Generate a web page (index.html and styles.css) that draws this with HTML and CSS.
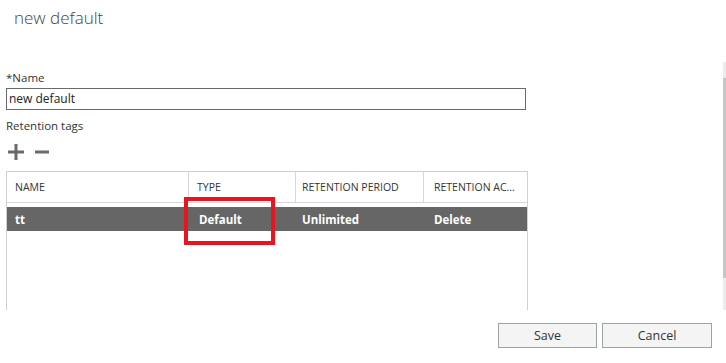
FILE: index.html
```html
<!DOCTYPE html>
<html>
<head>
<meta charset="utf-8">
<link rel="stylesheet" href="styles.css">
</head>
<body>
<div class="dialog">
  <h1 class="title">new default</h1>
  <div class="main">
    <div class="content">
      <div class="label">*Name</div>
      <div class="input">new default</div>
      <div class="label label-tags">Retention tags</div>
      <div class="toolbar">
        <svg class="icon" width="16" height="16" viewBox="0 0 16 16"><path d="M8 0v16M0 8h16" stroke="#6b6b6b" stroke-width="3" fill="none"/></svg>
        <svg class="icon" width="14" height="16" viewBox="0 0 14 16"><path d="M0 8h14" stroke="#6b6b6b" stroke-width="3" fill="none"/></svg>
      </div>
      <div class="grid">
        <div class="grid-head">
          <div class="cell c1">NAME</div>
          <div class="cell c2">TYPE</div>
          <div class="cell c3">RETENTION PERIOD</div>
          <div class="cell c4">RETENTION AC...</div>
        </div>
        <div class="grid-body">
          <div class="row selected">
            <div class="cell c1">tt</div>
            <div class="cell c2 marked">Default<span class="highlight"></span></div>
            <div class="cell c3">Unlimited</div>
            <div class="cell c4">Delete</div>
          </div>
        </div>
      </div>
    </div>
    <div class="scrollbar"><div class="thumb"></div></div>
  </div>
  <div class="footer">
    <button class="btn btn-save">Save</button>
    <button class="btn btn-cancel">Cancel</button>
  </div>
</div>
</body>
</html>
```
FILE: styles.css
```css
html, body {
  margin: 0;
  padding: 0;
  background: #fff;
}
body {
  font-family: "Open Sans", "Noto Sans", sans-serif;
  color: #333;
  width: 726px;
  height: 363px;
  overflow: hidden;
}
.dialog {
  display: flex;
  flex-direction: column;
}
.title {
  margin: 0;
  padding: 6px 0 0 14px;
  height: 24px;
  font-size: 17px;
  line-height: 24px;
  font-weight: 300;
  color: #444;
}
.main {
  margin-top: 32px;
  height: 248px;
  display: flex;
  overflow: hidden;
}
.content {
  flex: 1;
  padding-left: 6px;
  overflow: hidden;
}
.label {
  margin-top: 8px;
  font-size: 11.5px;
  line-height: 16px;
  color: #333;
}
.label-tags {
  margin-top: 8px;
}
.input {
  margin-top: 2px;
  width: 516px;
  height: 20px;
  border: 1px solid #6a6a6a;
  box-sizing: content-box;
  padding-left: 2px;
  font-size: 12px;
  line-height: 20px;
  color: #222;
}
.toolbar {
  display: flex;
  align-items: center;
  gap: 11px;
  padding-left: 2px;
  margin-top: 10px;
  height: 16px;
}
.icon {
  display: block;
}
.grid {
  margin-top: 11px;
  width: 520px;
  height: 200px;
  border: 1px solid #d0d0d0;
  border-bottom: none;
}
.grid-head {
  display: flex;
  height: 30px;
  border-bottom: 1px solid #d8d8d8;
}
.grid-head .cell {
  font-size: 10.5px;
  line-height: 30px;
  color: #333;
  border-right: 1px solid #d8d8d8;
}
.grid-head .cell.c4 {
  border-right: none;
}
.cell {
  padding-left: 8px;
  box-sizing: border-box;
  white-space: nowrap;
  overflow: hidden;
}
.c1 { width: 182px; }
.c2 { width: 107px; }
.c3 { width: 128px; padding-left: 6px; }
.c4 { width: 103px; padding-left: 10px; }
.grid-body {
  padding-top: 4px;
}
.row {
  display: flex;
  height: 24px;
}
.row.selected {
  background: #666;
}
.row .cell {
  font-size: 11.5px;
  font-weight: 700;
  line-height: 25px;
  color: #fff;
}
.row .cell.c2 {
  padding-left: 10px;
}
.marked {
  position: relative;
  overflow: visible;
}
.highlight {
  position: absolute;
  left: -5px;
  top: -10px;
  width: 91px;
  height: 48px;
  box-sizing: border-box;
  border: 4px solid #e8141f;
}
.scrollbar {
  width: 3px;
  background: #ececec;
  padding-top: 16px;
  box-sizing: border-box;
}
.thumb {
  height: 200px;
  background: #c6c6c6;
}
.footer {
  display: flex;
  justify-content: flex-end;
  gap: 5px;
  padding: 13px 14px 0 0;
}
.btn {
  height: 25px;
  border: 1px solid #9aa4a4;
  background: #f4f4f4;
  font-family: "Open Sans", "Noto Sans", sans-serif;
  font-size: 12.5px;
  color: #333;
  padding: 0;
}
.btn-save { width: 99px; }
.btn-cancel { width: 110px; }
```
